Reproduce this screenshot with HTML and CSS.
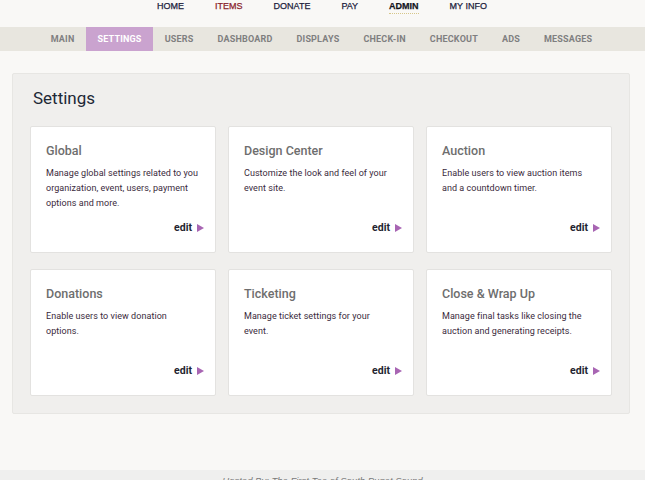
FILE: index.html
```html
<!DOCTYPE html>
<html>
<head>
<meta charset="utf-8">
<link rel="stylesheet" href="styles.css">
</head>
<body>
<nav class="topnav">
  <a class="tn">HOME</a>
  <a class="tn tn-red">ITEMS</a>
  <a class="tn">DONATE</a>
  <a class="tn">PAY</a>
  <a class="tn tn-active">ADMIN</a>
  <a class="tn">MY INFO</a>
</nav>
<nav class="subnav">
  <a class="sn">MAIN</a>
  <a class="sn sn-active">SETTINGS</a>
  <a class="sn">USERS</a>
  <a class="sn">DASHBOARD</a>
  <a class="sn">DISPLAYS</a>
  <a class="sn">CHECK-IN</a>
  <a class="sn">CHECKOUT</a>
  <a class="sn">ADS</a>
  <a class="sn">MESSAGES</a>
</nav>
<main class="main">
  <section class="panel">
    <h1 class="panel-title">Settings</h1>
    <div class="grid">
      <div class="card">
        <h2 class="card-title">Global</h2>
        <p class="card-desc">Manage global settings related to you organization, event, users, payment options and more.</p>
        <a class="edit">edit <span class="arrow"></span></a>
      </div>
      <div class="card">
        <h2 class="card-title">Design Center</h2>
        <p class="card-desc">Customize the look and feel of your event site.</p>
        <a class="edit">edit <span class="arrow"></span></a>
      </div>
      <div class="card">
        <h2 class="card-title">Auction</h2>
        <p class="card-desc">Enable users to view auction items and a countdown timer.</p>
        <a class="edit">edit <span class="arrow"></span></a>
      </div>
      <div class="card">
        <h2 class="card-title">Donations</h2>
        <p class="card-desc">Enable users to view donation options.</p>
        <a class="edit">edit <span class="arrow"></span></a>
      </div>
      <div class="card">
        <h2 class="card-title">Ticketing</h2>
        <p class="card-desc">Manage ticket settings for your<br>event.</p>
        <a class="edit">edit <span class="arrow"></span></a>
      </div>
      <div class="card">
        <h2 class="card-title">Close &amp; Wrap Up</h2>
        <p class="card-desc">Manage final tasks like closing the auction and generating receipts.</p>
        <a class="edit">edit <span class="arrow"></span></a>
      </div>
    </div>
  </section>
</main>
<footer class="footer">Hosted By: The First Tee of South Puget Sound</footer>
</body>
</html>
```
FILE: styles.css
```css
* { box-sizing: border-box; }
html, body { margin: 0; padding: 0; }
body {
  background: #f9f8f6;
  font-family: Roboto, "Liberation Sans", sans-serif;
  width: 645px;
  height: 480px;
  overflow: hidden;
}
.topnav {
  height: 27px;
  display: flex;
  justify-content: center;
  align-items: flex-start;
  gap: 31px;
  padding-top: 1px;
  padding-right: 1px;
}
.tn {
  font-family: "Liberation Sans", Arial, sans-serif;
  font-size: 9px;
  line-height: 11px;
  color: #1c1d3c;
  font-weight: normal;
  -webkit-text-stroke: 0.25px #1c1d3c;
}
.tn-red { color: #8a1f2d; -webkit-text-stroke-color: #8a1f2d; }
.tn-active {
  font-weight: bold;
  color: #111;
  border-bottom: 1px dotted #d6c68a;
  padding-bottom: 1px;
}
.subnav {
  height: 24px;
  background: #e8e6df;
  display: flex;
  justify-content: center;
  padding-right: 2px;
}
.sn {
  font-size: 9px;
  font-weight: bold;
  line-height: 24px;
  color: #7f7f7f;
  padding: 0 12px;
  letter-spacing: 0.2px;
}
.sn-active {
  background: #caa3cf;
  color: #fff;
  padding: 0 11px;
}
.main {
  padding: 22px 15px 0 12px;
  height: 419px;
}
.panel {
  background: #f0efed;
  border: 1px solid #e7e6e3;
  border-radius: 2px;
  padding: 14px 17px 17px;
}
.panel-title {
  margin: 0 0 18px 3px;
  font-size: 17px;
  line-height: 20px;
  font-weight: normal;
  color: #1d2836;
}
.grid {
  display: grid;
  grid-template-columns: repeat(3, 186px);
  grid-auto-rows: 127px;
  column-gap: 12px;
  row-gap: 16px;
}
.card {
  background: #fff;
  border: 1px solid #e3e2e0;
  border-radius: 2px;
  padding: 16px 16px 17px 15px;
  display: flex;
  flex-direction: column;
}
.card-title {
  margin: 0;
  font-size: 12.5px;
  line-height: 16px;
  font-weight: 500;
  color: #6e6e6e;
}
.card-desc {
  margin: 7px 0 0;
  font-size: 9px;
  line-height: 15px;
  color: #3a2a3c;
  letter-spacing: 0.05px;
}
.edit {
  margin-top: auto;
  margin-right: -5px;
  align-self: flex-end;
  display: flex;
  align-items: center;
  gap: 5px;
  font-size: 10.5px;
  line-height: 14px;
  font-weight: bold;
  color: #241f30;
}
.arrow {
  width: 0;
  height: 0;
  border-top: 4px solid transparent;
  border-bottom: 4px solid transparent;
  border-left: 7px solid #a865b3;
}
.footer {
  height: 20px;
  background: #efefee;
  text-align: center;
  font-family: "Liberation Sans", Arial, sans-serif;
  font-style: italic;
  font-size: 9.5px;
  line-height: 14px;
  padding-top: 4px;
  color: #7a7a7a;
}
```
